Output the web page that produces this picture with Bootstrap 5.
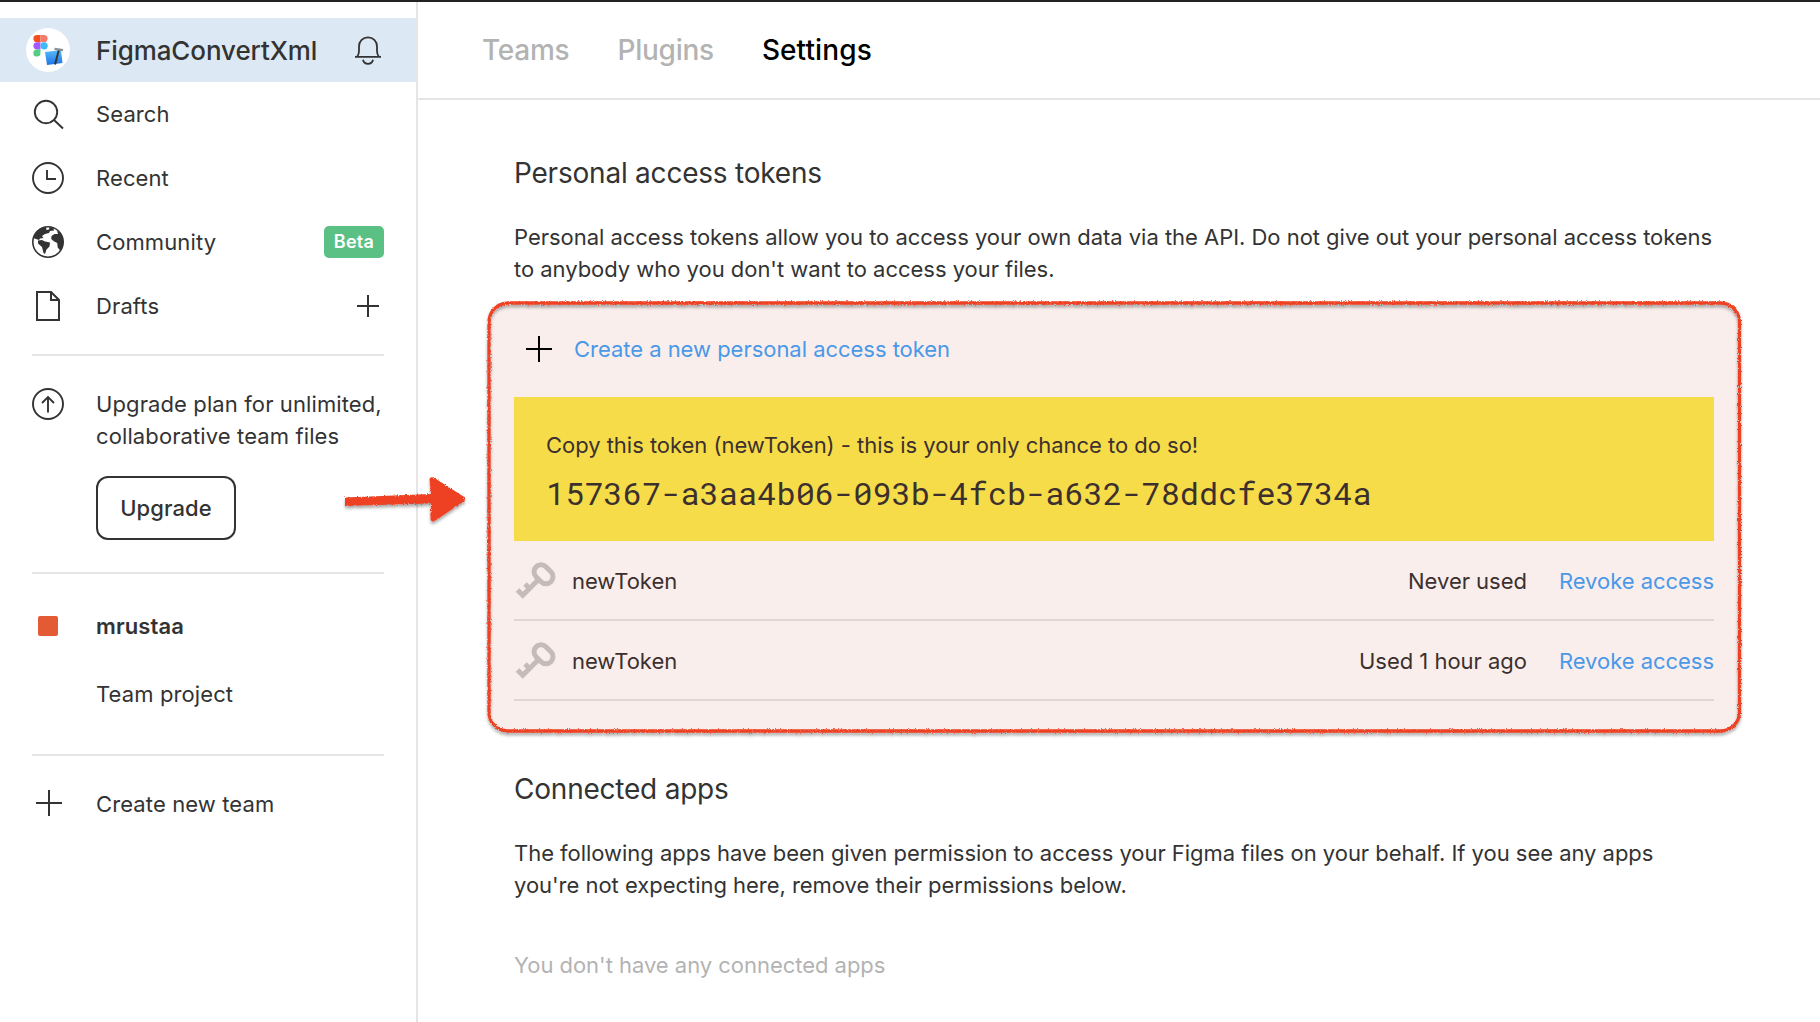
<!DOCTYPE html>
<html lang="en">
<head>
<meta charset="utf-8">
<title>Settings</title>
<link href="https://cdn.jsdelivr.net/npm/bootstrap@5.3.0/dist/css/bootstrap.min.css" rel="stylesheet">
<style>
:root{--ink:#333;--line:#e5e5e5;--faint:#b3b3b3;--link:#4a98e8}
body{font-family:Inter,"Liberation Sans",sans-serif;font-size:22px;line-height:32px;letter-spacing:.11px;color:var(--ink);height:1022px;overflow:hidden;background:#fff}
.app-shell{border-top:2px solid #222;height:1022px}
.side-pane{width:418px;border-right:2px solid var(--line);padding-top:16px}
.side-row{height:64px;padding:0 32px}
.side-icon{width:64px}
.side-icon svg,.side-end svg{display:block;overflow:visible}
.account-row{background:#dce9f4;padding-left:26px}
.account-row .side-icon{width:70px}
.account-name{font-size:26px;font-weight:500;letter-spacing:-.1px;padding-top:2px}
.side-end{width:32px}
.beta-tag{background:#5bc083;font-size:18px;font-weight:600;line-height:32px;width:60px;border-radius:5px;letter-spacing:.3px}
.side-rule{height:2px;margin:0 32px;background:var(--line)}
.upgrade-block{padding:32px 0 32px 32px}
.upgrade-btn{width:140px;height:64px;border:2px solid var(--ink);border-radius:12px;font-size:22px;font-weight:500;color:var(--ink);letter-spacing:.1px}
.team-row{margin-top:20px}
.team-dot{width:20px;height:20px;margin-left:6px;border-radius:2px;background:#e35b34}
.tab-bar{height:98px;border-bottom:2px solid var(--line);padding-left:64px;gap:48px;font-size:28px;font-weight:500;letter-spacing:-.25px}
.tab-bar .nav-link{padding:0;color:var(--faint);line-height:32px}
.tab-bar .nav-link.active{color:#000;letter-spacing:.1px}
.settings-body{width:1200px;margin-left:96px;padding-top:53px;letter-spacing:-.03px}
.sect-title{font-size:28px;line-height:40px;font-weight:400;letter-spacing:-.22px;margin:0}
.sect-text{margin:28px 0 0}
.token-box{margin:18px -26px 0 -26px;padding:0 26px;height:430px;background:#f9eeec;border-radius:20px;color:#3c302e}
.create-row{height:94px;padding:0 0 3px 12px;gap:22px}
.token-link{color:var(--link);text-decoration:none}
.token-alert{height:144px;background:#f6dc49;padding:32px 32px 0;border-radius:0}
.token-value{font-family:"Roboto Mono","DejaVu Sans Mono",monospace;font-size:32px;line-height:44px;letter-spacing:0;margin-top:10px}
.token-row{height:80px;border-bottom:2px solid #e0d6d4}
.token-row span,.token-row a{padding-top:2px}
.revoke{margin-left:32px}
.scribble{left:0;top:0;pointer-events:none}
</style>
<script src="https://cdn.jsdelivr.net/npm/bootstrap@5.3.0/dist/js/bootstrap.bundle.min.js"></script>
</head>
<body>
<div class="app-shell d-flex">
  <aside class="side-pane flex-shrink-0">
    <div class="side-row account-row d-flex align-items-center">
      <div class="side-icon"><svg width="44" height="44" viewBox="0 0 44 44"><defs><linearGradient id="xb" x1="0" y1="0" x2="0" y2="1"><stop offset="0" stop-color="#58bdf8"/><stop offset="1" stop-color="#1c73e8"/></linearGradient></defs><circle cx="22" cy="22" r="22" fill="#fff"/><path d="M14.500 7H11a3.600 3.600 0 0 0 0 7.200h3.500z" fill="#f24e1e"/><path d="M14.500 7H18a3.600 3.600 0 0 1 0 7.200h-3.500z" fill="#f47a6b"/><path d="M14.500 14.200H11a3.600 3.600 0 0 0 0 7.200h3.500z" fill="#a259ff"/><circle cx="18.100" cy="17.800" r="3.600" fill="#3db8f8"/><path d="M14.500 21.400H11a3.600 3.600 0 1 0 3.500 3.600z" fill="#55cd87"/><path d="M19 24l16-2L36.500 35 21 37z" fill="url(#xb)"/><path d="M33 21.500L29 36.500" stroke="#333" stroke-width="2"/><path d="M28.500 20.800l8.500 1.400" stroke="#8a8f94" stroke-width="2.200"/></svg></div>
      <div class="account-name flex-grow-1">FigmaConvertXml</div>
      <div class="side-end"><svg width="32" height="32" viewBox="0 0 32 32" fill="none" stroke="#333" stroke-width="1.800"><path d="M3 22.800h26M5.200 22.600C6.500 21 7 19.500 7 17v-4.500C7 7 11 3.300 16 3.300S25 7 25 12.500V17c0 2.500.5 4 1.800 5.600M11 25.800c.5 2.500 2.300 4 5 4s4.500-1.500 5-4"/></svg></div>
    </div>
    <div class="side-row d-flex align-items-center"><div class="side-icon"><svg width="32" height="32" viewBox="0 0 32 32" fill="none" stroke="#333" stroke-width="1.900"><circle cx="14" cy="14" r="11.200"/><path d="M22 22l9 8.500"/></svg></div>Search</div>
    <div class="side-row d-flex align-items-center"><div class="side-icon"><svg width="32" height="32" viewBox="0 0 32 32" fill="none" stroke="#333" stroke-width="1.900"><circle cx="16" cy="16" r="15"/><path d="M15 8v9h9"/></svg></div>Recent</div>
    <div class="side-row d-flex align-items-center"><div class="side-icon"><svg width="32" height="32" viewBox="0 0 32 32"><circle cx="16" cy="16" r="15.200" fill="#fff" stroke="#333" stroke-width="1.600"/><path fill="#333" d="M1.500 12C3 6 8 1.500 14 1l.5 3 2.500-.5.500-2.500 4 .8.500 2.700-4 .5-1 2-4 1-3 2 1.500 2-3.500.500-1 1.500-3-1zM6 14.500l4-.5 3 1.500 5 1-.5 4-3 3-1.500 4.500-1.500-1L10 21l-4-3.500zM19.500 10l3-2h3.500L25 5l3 1.500c2 3 3.200 6 3.200 9.500s-1 6-3 8.500l-2.500-3-.5-4.500-3-1.500-3-2.500z"/></svg></div><span class="flex-grow-1">Community</span><span class="badge beta-tag p-0">Beta</span></div>
    <div class="side-row d-flex align-items-center"><div class="side-icon"><svg width="32" height="32" viewBox="0 0 32 32" fill="none" stroke="#333" stroke-width="2"><path d="M5 2h14l8 8v20H5zM19 2v8h8"/></svg></div><span class="flex-grow-1">Drafts</span><div class="side-end"><svg width="32" height="32" viewBox="0 0 32 32" stroke="#333" stroke-width="2"><path d="M5 16h22M16 5v22"/></svg></div></div>
    <div class="side-rule mt-3"></div>
    <div class="upgrade-block d-flex">
      <div class="side-icon flex-shrink-0"><svg width="32" height="32" viewBox="0 0 32 32" fill="none" stroke="#333" stroke-width="1.900"><circle cx="16" cy="16" r="15"/><path d="M16 24.500V9M10 15l6-6 6 6"/></svg></div>
      <div><div class="text-nowrap">Upgrade plan for unlimited,<br>collaborative team files</div><button class="btn upgrade-btn p-0 mt-4" type="button">Upgrade</button></div>
    </div>
    <div class="side-rule"></div>
    <div class="side-row team-row d-flex align-items-center fw-semibold"><div class="side-icon"><div class="team-dot"></div></div>mrustaa</div>
    <div class="side-row d-flex align-items-center mt-1"><div class="side-icon"></div>Team project</div>
    <div class="side-rule" style="margin-top:28px"></div>
    <div class="side-row d-flex align-items-center mt-3"><div class="side-icon"><svg width="32" height="32" viewBox="0 0 32 32" stroke="#333" stroke-width="2"><path d="M4 15h26M17 2v26"/></svg></div>Create new team</div>
  </aside>
  <main class="flex-grow-1">
    <nav class="nav tab-bar align-items-center"><a class="nav-link" href="#">Teams</a><a class="nav-link" href="#">Plugins</a><a class="nav-link active" href="#">Settings</a></nav>
    <div class="settings-body">
      <h2 class="sect-title">Personal access tokens</h2>
      <p class="sect-text text-nowrap">Personal access tokens allow you to access your own data via the API. Do not give out your personal access tokens<br>to anybody who you don't want to access your files.</p>
      <section class="token-box">
        <div class="create-row d-flex align-items-center"><svg width="26" height="26" viewBox="0 0 26 26" stroke="#000" stroke-width="2"><path d="M0 13h26M13 0v26"/></svg><a class="token-link" href="#">Create a new personal access token</a></div>
        <div class="alert token-alert border-0 m-0"><div>Copy this token (newToken) - this is your only chance to do so!</div><div class="token-value">157367-a3aa4b06-093b-4fcb-a632-78ddcfe3734a</div></div>
        <div class="token-row d-flex align-items-center"><svg width="42" height="40" viewBox="0 0 42 40" fill="none" stroke="#c5bbb9" stroke-width="5"><rect x="-10.500" y="-7" width="21" height="14" rx="7" transform="translate(29.500 14.300) rotate(45)"/><path d="M24 20L8.800 35.200M10.500 36.900L3.500 29.900M15.500 28.500L11 24"/></svg><span class="flex-grow-1 ms-3">newToken</span><span>Never used</span><a class="token-link revoke" href="#">Revoke access</a></div>
        <div class="token-row d-flex align-items-center"><svg width="42" height="40" viewBox="0 0 42 40" fill="none" stroke="#c5bbb9" stroke-width="5"><rect x="-10.500" y="-7" width="21" height="14" rx="7" transform="translate(29.500 14.300) rotate(45)"/><path d="M24 20L8.800 35.200M10.500 36.900L3.500 29.900M15.500 28.500L11 24"/></svg><span class="flex-grow-1 ms-3">newToken</span><span>Used 1 hour ago</span><a class="token-link revoke" href="#">Revoke access</a></div>
      </section>
      <h2 class="sect-title" style="margin-top:36px">Connected apps</h2>
      <p class="sect-text text-nowrap">The following apps have been given permission to access your Figma files on your behalf. If you see any apps<br>you're not expecting here, remove their permissions below.</p>
      <p class="mb-0 mt-5" style="color:var(--faint)">You don't have any connected apps</p>
    </div>
  </main>
</div>
<svg class="scribble position-absolute" width="1820" height="1022" viewBox="0 0 1820 1022">
  <defs><filter id="rough" filterUnits="userSpaceOnUse" x="300" y="280" width="1480" height="480"><feTurbulence type="fractalNoise" baseFrequency=".7" numOctaves="2" seed="4" result="n"/><feDisplacementMap in="SourceGraphic" in2="n" scale="3" xChannelSelector="R" yChannelSelector="G" result="d"/><feDropShadow in="d" dx="0" dy="2.500" stdDeviation="1.800" flood-color="#000" flood-opacity=".35"/></filter></defs>
  <g filter="url(#rough)"><rect x="489" y="303" width="1250.500" height="428" rx="19" fill="none" stroke="#ee4023" stroke-width="3.300"/><path d="M345 497.500l86-3.500-1.500-15c.5-2 3-2.500 5-1l29 18.500c2 1.500 2 3.500 0 5l-28 19c-3 2-5 .5-5-2l.5-15-86 2.500z" fill="#ee4023"/></g>
</svg>
</body>
</html>
